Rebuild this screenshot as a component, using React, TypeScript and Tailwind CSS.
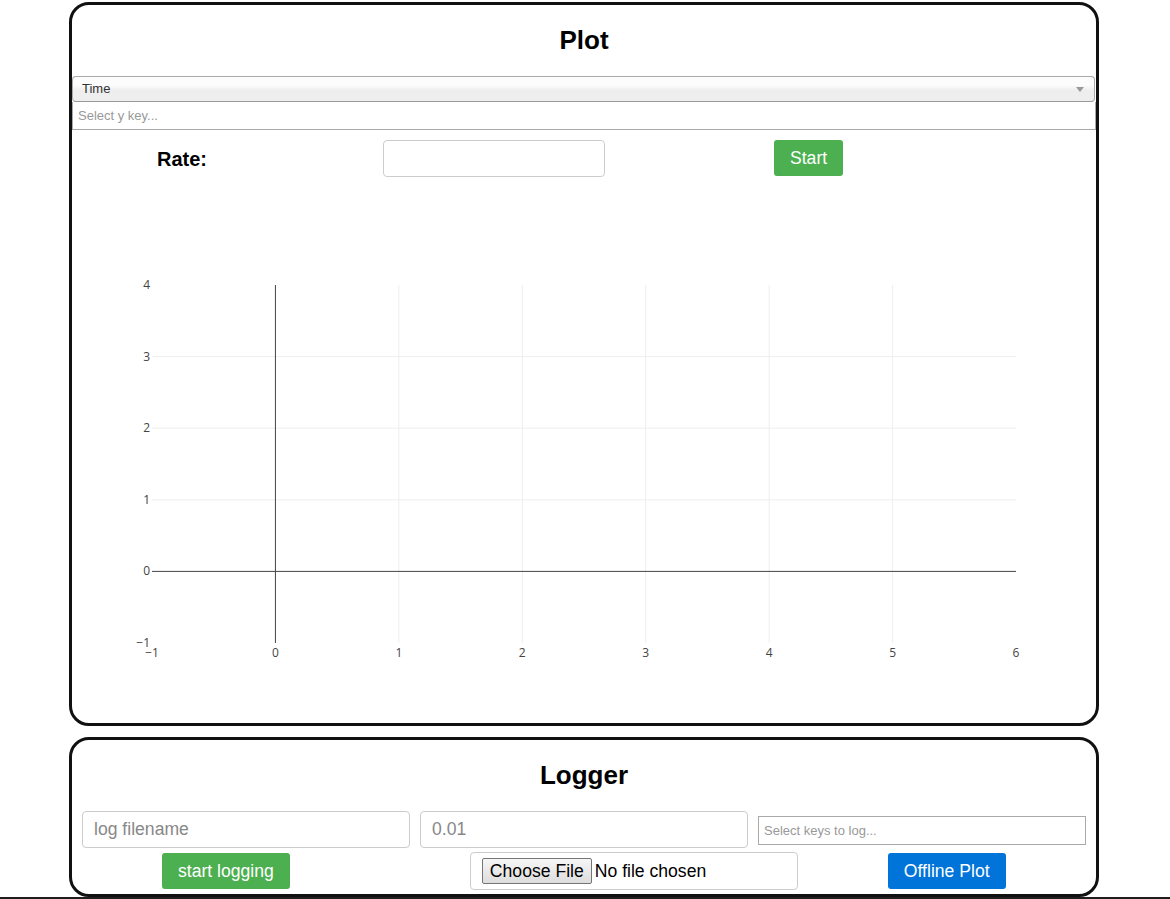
import React from "react";

const PX0 = 80;
const PY0 = 100;
const XS = 864 / 7;
const YS = 358 / 5;
const xp = (v: number) => PX0 + (v + 1) * XS;
const yp = (v: number) => PY0 + (4 - v) * YS;

function Chart() {
  const xTicks = [-1, 0, 1, 2, 3, 4, 5, 6];
  const yTicks = [-1, 0, 1, 2, 3, 4];
  const lab = (v: number) => (v < 0 ? "\u2212" + Math.abs(v) : String(v));
  return (
    <svg width={1024} height={538} className="block" style={{ fontFamily: '"Open Sans", sans-serif' }}>
      {[1, 2, 3, 4, 5].map((v) => (
        <line key={"gx" + v} x1={xp(v)} x2={xp(v)} y1={PY0} y2={PY0 + 358} stroke="#eeeeee" strokeWidth={1} />
      ))}
      {[1, 2, 3].map((v) => (
        <line key={"gy" + v} x1={PX0} x2={PX0 + 864} y1={yp(v)} y2={yp(v)} stroke="#eeeeee" strokeWidth={1} />
      ))}
      <line x1={xp(0)} x2={xp(0)} y1={PY0} y2={PY0 + 358} stroke="#444" strokeWidth={1} />
      <line x1={PX0} x2={PX0 + 864} y1={yp(0)} y2={yp(0)} stroke="#444" strokeWidth={1} />
      {yTicks.map((v) => (
        <text key={"ty" + v} x={PX0 - 2} y={yp(v) + 4} textAnchor="end" fontSize={12} fill="#444">
          {lab(v)}
        </text>
      ))}
      {xTicks.map((v) => (
        <text key={"tx" + v} x={xp(v)} y={PY0 + 358 + 14} textAnchor="middle" fontSize={12} fill="#444">
          {lab(v)}
        </text>
      ))}
    </svg>
  );
}

export default function App() {
  return (
    <div
      className="w-[1170px] min-h-[899px] bg-white pt-[2px] text-black"
      style={{ fontFamily: '"Liberation Sans", Arial, sans-serif' }}
    >
      <div className="ml-[69px] w-[1030px] h-[724px] border-[3px] border-[#111] rounded-[20px] flex flex-col overflow-hidden">
        <h2 className="mt-[20px] mb-[21px] text-[26px] leading-[30px] font-bold text-center">Plot</h2>
        <div className="relative h-[26px] border border-[#aaa] border-b-[#999] rounded-[4px] bg-gradient-to-b from-[#fcfcfc] from-[35%] to-[#eeeeee] to-[55%] flex items-center pl-[9px] mr-[1px]">
          <span className="text-[13px] text-[#333]">Time</span>
          <span className="absolute right-[10px] top-[10px] w-0 h-0 border-t-[5px] border-t-[#999] border-x-[4px] border-x-transparent" />
        </div>
        <div className="h-[28px] border border-[#aaa] border-t-0 flex items-center pl-[5px]">
          <span className="text-[13px] text-[#999]">Select y key...</span>
        </div>
        <div className="mt-[10px] h-[37px] flex items-center">
          <span className="ml-[85px] w-[50px] text-[20px] font-bold whitespace-nowrap">Rate:</span>
          <input
            className="ml-[176px] w-[222px] h-[37px] border border-[#ccc] rounded-[4px] outline-none px-2"
            type="text"
          />
          <button className="ml-[169px] h-[36px] self-start px-[16px] bg-[#4CAF50] text-white text-[17.6px] rounded-[3px]">
            Start
          </button>
        </div>
        <div className="mt-[8px]">
          <Chart />
        </div>
      </div>

      <div className="mt-[11px] ml-[69px] w-[1030px] h-[160px] border-[3px] border-[#111] rounded-[20px] flex flex-col">
        <h2 className="mt-[20px] mb-[21px] text-[26px] leading-[30px] font-bold text-center">Logger</h2>
        <div className="flex gap-[10px] px-[10px] h-[37px]">
          <input
            className="w-[328px] h-[37px] border border-[#ccc] rounded-[4px] px-[11px] text-[17.6px] placeholder:text-[#888] outline-none"
            placeholder="log filename"
          />
          <input
            className="w-[328px] h-[37px] border border-[#ccc] rounded-[4px] px-[11px] text-[17.6px] placeholder:text-[#888] outline-none"
            placeholder="0.01"
          />
          <div className="w-[328px] h-[29px] mt-[5px] border border-[#aaa] flex items-center pl-[5px]">
            <span className="text-[13px] text-[#999]">Select keys to log...</span>
          </div>
        </div>
        <div className="mt-[4px] h-[38px] flex items-start">
          <button className="ml-[90px] mt-[1px] h-[36px] px-[16px] bg-[#4CAF50] text-white text-[17.6px] rounded-[3px] whitespace-nowrap">
            start logging
          </button>
          <div className="ml-[180px] w-[328px] h-[38px] border border-[#ccc] rounded-[4px] flex items-center pl-[11px]">
            <span className="h-[26px] px-[7px] border border-[#767676] rounded-[2px] bg-gradient-to-b from-[#f6f6f6] to-[#dddddd] text-[17.6px] leading-[24px] whitespace-nowrap">
              Choose File
            </span>
            <span className="ml-[3px] text-[17.6px] whitespace-nowrap">No file chosen</span>
          </div>
          <button className="ml-[90px] mt-[1px] h-[36px] px-[16px] bg-[#0074D9] text-white text-[17.6px] rounded-[3px] whitespace-nowrap">
            Offline Plot
          </button>
        </div>
      </div>
      <div className="h-[2px] bg-[#1e1e1e]" />
    </div>
  );
}
